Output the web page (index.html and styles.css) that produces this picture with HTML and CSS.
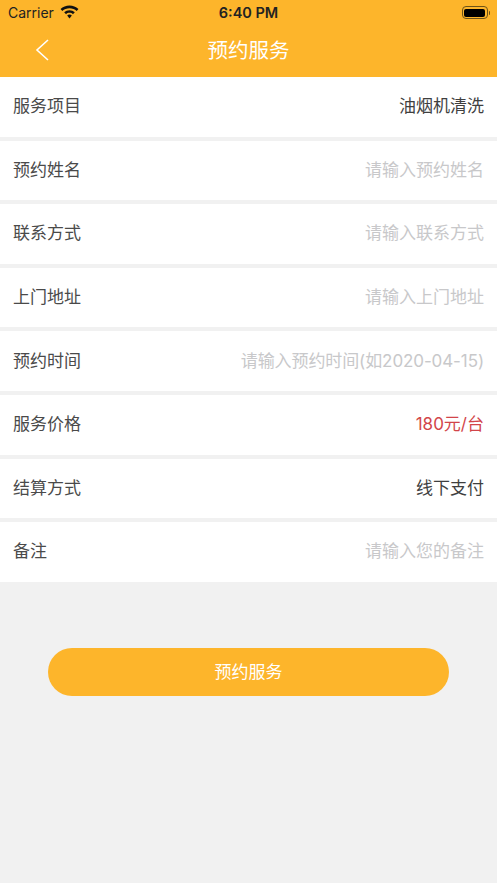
FILE: index.html
```html
<!DOCTYPE html>
<html lang="zh">
<head>
  <meta charset="UTF-8" />
  <meta name="viewport" content="width=device-width, initial-scale=1" />
  <title>预约服务</title>
  <link rel="stylesheet" href="styles.css">
</head>
<body>

  <div class="top-bar">
    <div class="status-bar">
      <div class="status-left">
        <span class="carrier">Carrier</span>
        <svg class="wifi" viewBox="0 0 20 15" width="19" height="14">
          <path d="M10 .6C6.300.6 3 2 .4 4.400l1.900 2C4.300 4.500 7 3.400 10 3.400s5.700 1.100 7.700 3l1.900-2C17 2 13.700.6 10 .6z" fill="#111"/>
          <path d="M10 5.600c-2.200 0-4.200.9-5.700 2.200l2 2c1-.9 2.300-1.400 3.700-1.400s2.700.5 3.700 1.400l2-2c-1.500-1.300-3.500-2.200-5.700-2.200z" fill="#111"/>
          <path d="M10 10.300c-1 0-1.800.3-2.500.9L10 14.400l2.500-3.200c-.7-.6-1.500-.9-2.500-.9z" fill="#111"/>
        </svg>
      </div>
      <span class="clock">6:40 PM</span>
      <div class="battery">
        <div class="battery-body"><div class="battery-fill"></div></div>
        <div class="battery-tip"></div>
      </div>
    </div>
    <div class="nav-bar">
      <svg class="back" viewBox="0 0 16 24" width="16" height="24">
        <path d="M14 2L3 12l11 10" fill="none" stroke="#fff" stroke-width="1.600"/>
      </svg>
      <div class="nav-title">预约服务</div>
    </div>
  </div>

  <div class="form-list">
    <div class="form-row"><span class="label">服务项目</span><span class="value">油烟机清洗</span></div>
    <div class="form-row"><span class="label">预约姓名</span><span class="hint">请输入预约姓名</span></div>
    <div class="form-row"><span class="label">联系方式</span><span class="hint">请输入联系方式</span></div>
    <div class="form-row"><span class="label">上门地址</span><span class="hint">请输入上门地址</span></div>
    <div class="form-row"><span class="label">预约时间</span><span class="hint hint-date">请输入预约时间(如2020-04-15)</span></div>
    <div class="form-row"><span class="label">服务价格</span><span class="price">180元/台</span></div>
    <div class="form-row"><span class="label">结算方式</span><span class="value">线下支付</span></div>
    <div class="form-row"><span class="label">备注</span><span class="hint">请输入您的备注</span></div>
  </div>

  <div class="btn-wrap">
    <button class="btn-submit">预约服务</button>
  </div>

</body>
</html>
```

FILE: styles.css
```css
* {
  box-sizing: border-box;
}
html, body {
  height: 100%;
}
body {
  margin: 0;
  background-color: #f1f1f1;
  font-family: "Inter", "Noto Sans CJK SC", sans-serif;
  color: #333333;
  overflow: hidden;
}
/* Top */
.top-bar {
  height: 77px;
  background-color: #fdb52b;
}
.status-bar {
  height: 25px;
  padding: 0 7px 0 8px;
  display: flex;
  align-items: center;
  justify-content: space-between;
  position: relative;
  color: #222222;
}
.status-left {
  display: flex;
  align-items: center;
  gap: 6px;
}
.carrier {
  font-size: 14px;
  font-weight: 400;
}
.wifi {
  margin-top: -1px;
}
.clock {
  font-size: 14.500px;
  font-weight: 600;
  position: absolute;
  left: 0;
  right: 0;
  text-align: center;
}
.battery {
  display: flex;
  align-items: center;
  gap: 1px;
}
.battery-body {
  width: 26px;
  height: 13px;
  border: 1px solid #6d5318;
  border-radius: 4px;
  padding: 1.500px;
}
.battery-fill {
  height: 100%;
  background-color: #000000;
  border-radius: 2px;
}
.battery-tip {
  width: 1.500px;
  height: 4px;
  background-color: #6d5318;
  border-radius: 0 1px 1px 0;
}
.nav-bar {
  height: 52px;
  padding-bottom: 5px;
  position: relative;
  display: flex;
  align-items: center;
  justify-content: center;
}
.back {
  position: absolute;
  left: 34px;
  top: 13px;
}
.nav-title {
  color: #ffffff;
  font-size: 20.500px;
  font-weight: 400;
}
/* Rows */
.form-list {
  display: flex;
  flex-direction: column;
  gap: 4px;
}
.form-row {
  height: 59.600px;
  background-color: #ffffff;
  padding: 0 13px 4px;
  display: flex;
  align-items: center;
  justify-content: space-between;
  font-size: 17px;
}
.label {
  color: #4a4a4a;
}
.value {
  color: #3f3f3f;
}
.hint {
  color: #c8c8ca;
}
.hint-date {
  letter-spacing: -0.100px;
}
.price {
  color: #d2454a;
}
/* Button */
.btn-wrap {
  padding: 66px 48px 0;
}
.btn-submit {
  display: block;
  width: 100%;
  height: 48px;
  padding: 0 0 3px;
  border: none;
  border-radius: 24px;
  background-color: #fdb52b;
  color: #ffffff;
  font-family: inherit;
  font-size: 17px;
}
```
